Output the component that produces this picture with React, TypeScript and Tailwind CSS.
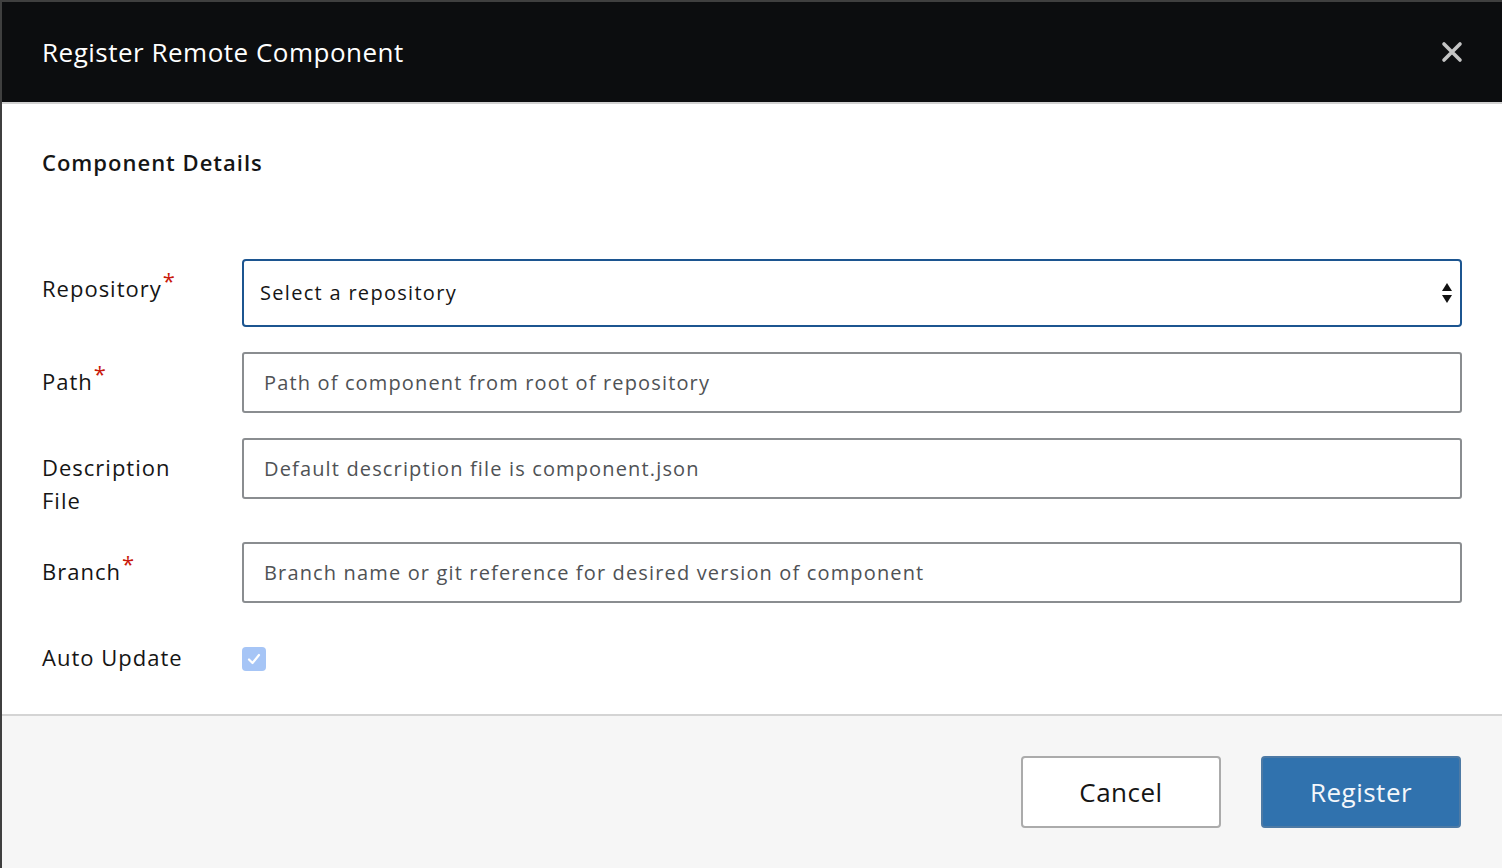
export default function App() {
  const fields = [
    { label: 'Path', required: true, placeholder: 'Path of component from root of repository' },
    { label: 'Description File', required: false, placeholder: 'Default description file is component.json' },
    { label: 'Branch', required: true, placeholder: 'Branch name or git reference for desired version of component' },
  ]

  return (
    <div
      className="w-[1502px] h-[868px] bg-[#3f3f3f] pt-[2px] pl-[2px] flex flex-col overflow-hidden"
      style={{ fontFamily: '"Open Sans", "Liberation Sans", sans-serif' }}
    >
      <div className="flex-1 flex flex-col bg-white">
        {/* Header */}
        <header className="h-[102px] shrink-0 bg-[#0c0d0f] border-b-2 border-[#d1d1d1] pl-[40px] pr-[40px] flex items-center justify-between">
          <h1 className="text-[26px] leading-[34px] tracking-[0.5px] text-white">Register Remote Component</h1>
          <button className="w-[24px] h-[24px] flex items-center justify-center mr-[-2px]" aria-label="Close">
            <svg width="22" height="22" viewBox="0 0 22 22">
              <path d="M3 3 L19 19 M19 3 L3 19" stroke="#c4c4c4" strokeWidth="3.6" strokeLinecap="round" />
            </svg>
          </button>
        </header>

        {/* Body */}
        <main className="flex-1 pl-[40px] pr-[40px] pt-[43px]">
          <h2 className="text-[22px] leading-[30px] tracking-[1px] font-semibold text-[#151515]">Component Details</h2>

          <div className="mt-[82px] flex flex-col gap-[25px]">
            <div className="flex items-start">
              <label className="w-[200px] shrink-0 pt-[13px] text-[22px] leading-[33px] tracking-[1px] text-[#151515]">
                Repository<sup className="text-[#c9190b] text-[22px] ml-[1px] top-[-0.35em]">*</sup>
              </label>
              <div className="flex-1 h-[68px] border-2 border-[#1c5590] rounded-[4px] pl-[16px] pr-[8px] flex items-center justify-between">
                <span className="text-[20px] tracking-[1.3px] text-[#151515]">Select a repository</span>
                <svg width="10" height="22" viewBox="0 0 10 22">
                  <path d="M5 1 L10 9 L0 9 Z M0 13 L10 13 L5 21 Z" fill="#111" />
                </svg>
              </div>
            </div>

            {fields.map((f) => (
              <div key={f.label} className="flex items-start">
                <label className="w-[200px] shrink-0 pt-[13px] pr-[40px] text-[22px] leading-[33px] tracking-[1px] text-[#151515]">
                  {f.label}
                  {f.required && <sup className="text-[#c9190b] text-[22px] ml-[1px] top-[-0.35em]">*</sup>}
                </label>
                <div className="flex-1 h-[61px] border-2 border-[#8a8d90] rounded-[3px] pl-[20px] flex items-center">
                  <span className="text-[20px] text-[#4f5255] tracking-[1.15px]">{f.placeholder}</span>
                </div>
              </div>
            ))}

            <div className="flex items-start">
              <label className="w-[200px] shrink-0 pt-[13px] text-[22px] leading-[33px] tracking-[1px] text-[#151515]">Auto Update</label>
              <div className="pt-[19px]">
                <div className="w-[24px] h-[24px] rounded-[4px] bg-[#a6c5f6] flex items-center justify-center">
                  <svg width="16" height="16" viewBox="0 0 16 16">
                    <path d="M3 8.5 L6.5 12 L13 4" stroke="white" strokeWidth="2.2" fill="none" strokeLinecap="round" strokeLinejoin="round" />
                  </svg>
                </div>
              </div>
            </div>
          </div>
        </main>

        {/* Footer */}
        <footer className="h-[154px] shrink-0 bg-[#f6f6f6] border-t-2 border-[#d4d4d4] pr-[41px] flex items-center justify-end gap-[40px]">
          <button className="w-[200px] h-[72px] bg-white border-2 border-[#ababab] rounded-[4px] text-[26px] tracking-[0.5px] text-[#151515]">
            Cancel
          </button>
          <button className="w-[200px] h-[72px] bg-[#3072ae] border-2 border-[#4d7aa5] rounded-[4px] text-[26px] tracking-[0.5px] text-[#f4f7fb]">
            Register
          </button>
        </footer>
      </div>
    </div>
  )
}
